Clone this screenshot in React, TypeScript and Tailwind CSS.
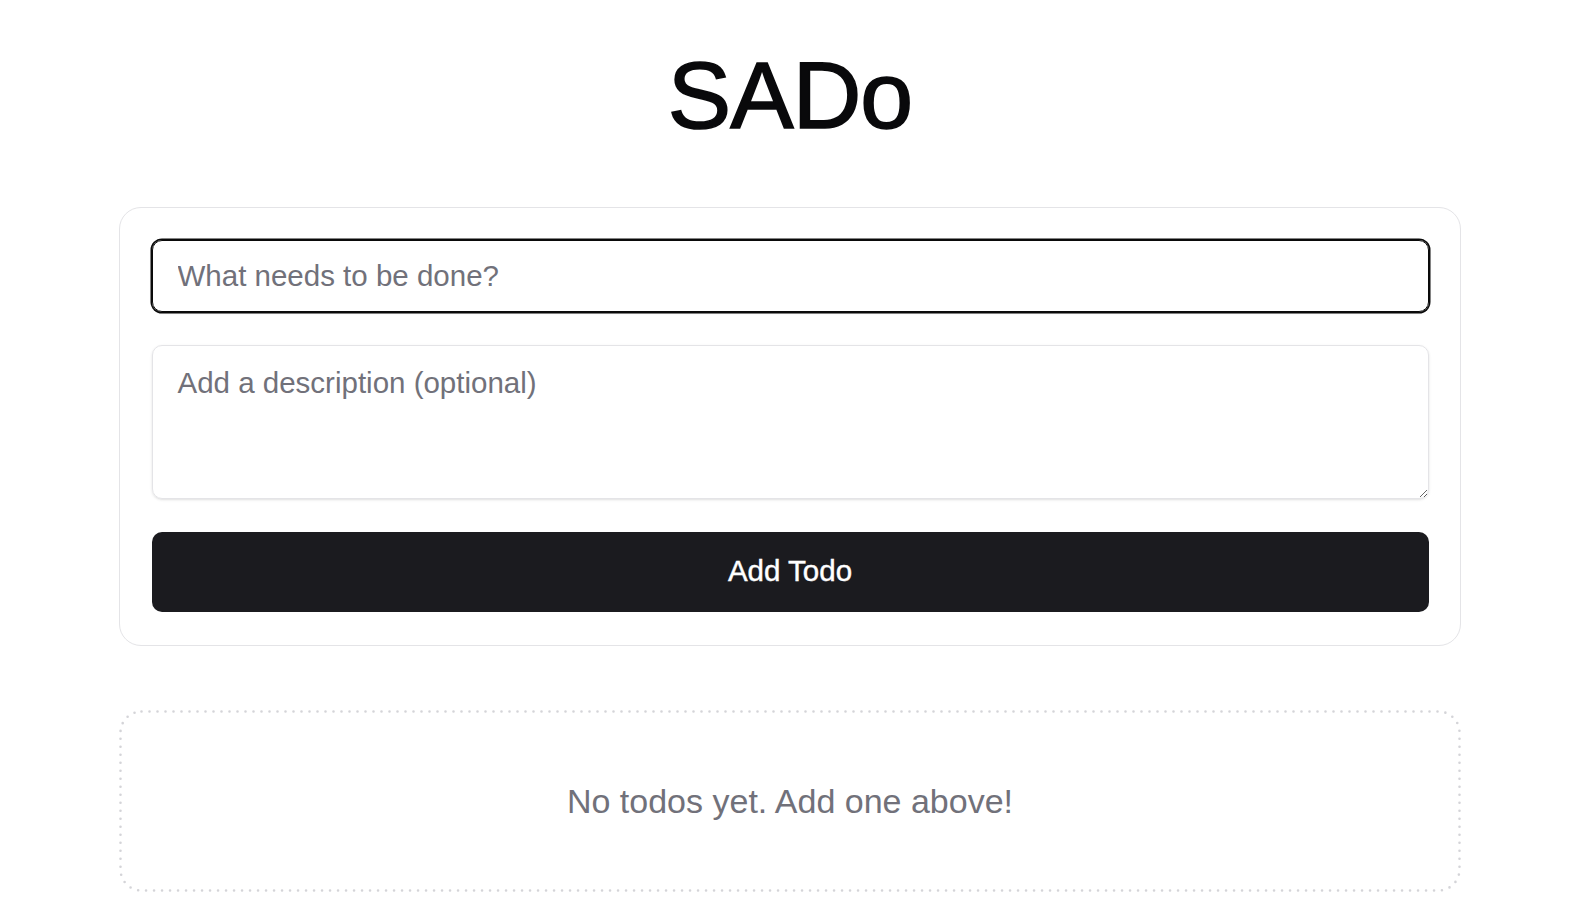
import React from "react";

export default function App() {
  return (
    <div className="min-h-screen bg-white pr-[16px] text-[#09090b]" style={{ fontFamily: '"Liberation Sans", Arial, sans-serif' }}>
      <h1 className="pt-[48px] text-center text-[95px] leading-none font-normal tracking-[-0.01em] [-webkit-text-stroke:1.6px_#09090b]">SADo</h1>
      <div className="mx-auto mt-[64px] w-[1342px] rounded-[22px] border-[1.5px] border-[#e4e4e7] bg-white px-[31.5px] pt-[31.5px] pb-[33.5px] flex flex-col gap-[33px]">
        <input
          type="text"
          placeholder="What needs to be done?"
          className="h-[72px] w-full rounded-[10px] border border-[#0a0a0a] px-[25px] text-[29.5px] shadow-sm outline-none ring-[1.5px] ring-[#0a0a0a] placeholder:text-[#71717a]"
        />
        <textarea
          placeholder="Add a description (optional)"
          className="h-[154px] w-full rounded-[10px] border border-[#e4e4e7] px-[25px] py-[15px] text-[29.5px] leading-[1.5] shadow-sm outline-none placeholder:text-[#71717a]"
        />
        <button className="h-[80px] w-full rounded-[10px] bg-[#1b1b1f] text-[29.5px] font-medium text-white [-webkit-text-stroke:0.4px_#ffffff]">
          Add Todo
        </button>
      </div>
      <div className="relative mx-auto mt-[64px] flex h-[182px] w-[1342px] items-center justify-center rounded-[22px]">
        <svg className="pointer-events-none absolute inset-0" width="1342" height="182" viewBox="0 0 1342 182">
          <rect
            x="1.5"
            y="1.5"
            width="1339"
            height="179"
            rx="21"
            fill="none"
            stroke="#d4d4d8"
            strokeWidth="2.6"
            strokeDasharray="0 8"
            strokeLinecap="round"
          />
        </svg>
        <p className="text-[34px] text-[#71717a]">No todos yet. Add one above!</p>
      </div>
    </div>
  );
}
